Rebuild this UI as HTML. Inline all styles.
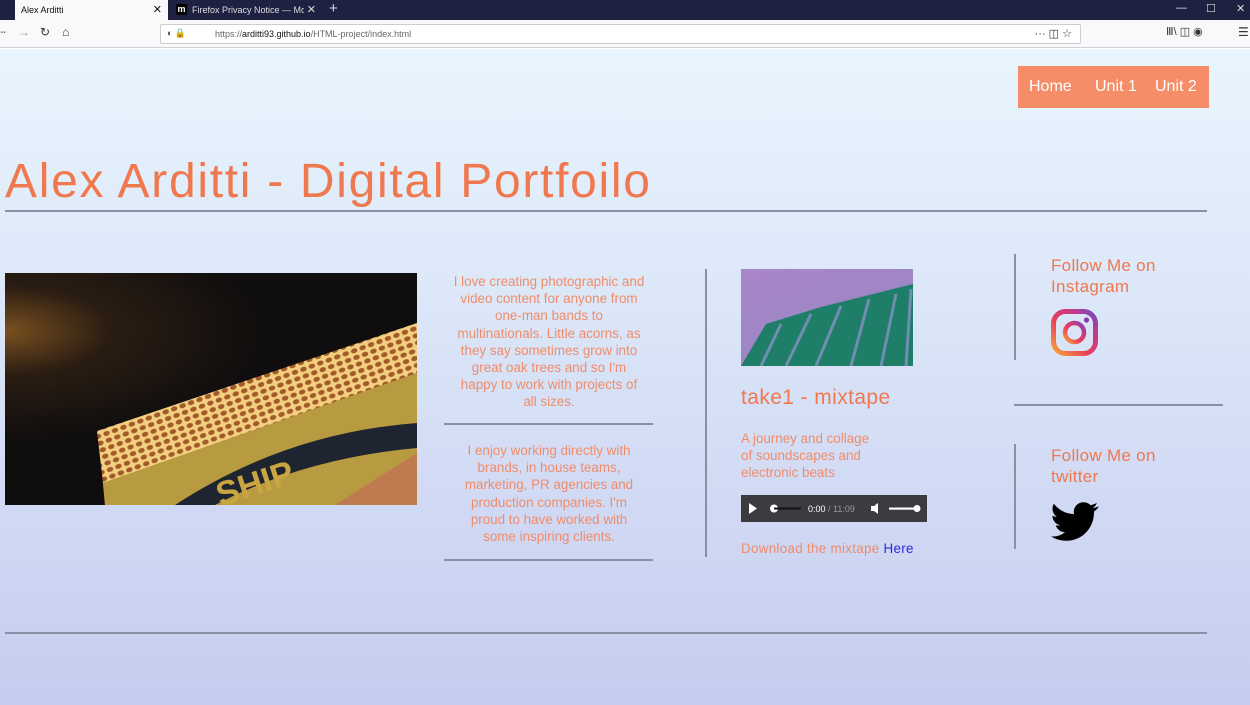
<!DOCTYPE html>
<html><head><meta charset="utf-8"><style>
*{margin:0;padding:0;box-sizing:border-box}
body{width:1250px;height:705px;overflow:hidden;font-family:"Liberation Sans","DejaVu Sans",sans-serif;position:relative;background:#fff}
.tabs{position:absolute;left:0;top:0;width:1250px;height:20px;background:#1f2143}
.tab1{position:absolute;left:15px;top:0;width:153px;height:20px;background:#f9f9fb;font-size:9px;color:#111;padding:5px 6px}
.tab1 .x{position:absolute;right:6px;top:3px;font-size:11px}
.tab2{position:absolute;left:170px;top:0;width:152px;height:20px;color:#ddd;font-size:9px;padding:5px 22px;white-space:nowrap;overflow:hidden}
.tab2 .m{position:absolute;left:6px;top:4px;width:11px;height:11px;background:#000;color:#fff;font-size:9px;font-weight:bold;line-height:10px;text-align:center}
.tab2 .t{display:inline-block;width:112px;overflow:hidden;vertical-align:top}
.tab2 .x{position:absolute;right:6px;top:3px;font-size:11px}
.plus{position:absolute;left:329px;top:0;color:#ddd;font-size:15px}
.win{position:absolute;top:2px;color:#ddd;font-size:11px}
.nav{position:absolute;left:0;top:20px;width:1250px;height:28px;background:#f9f9fb;border-bottom:1px solid #d0d0d8}
.url{position:absolute;left:160px;top:4px;width:921px;height:20px;background:#fff;border:1px solid #ccc;border-radius:2px;font-size:9px;color:#666;padding:4px 0 0 54px}
.url b{font-weight:normal;color:#111}
.ic{position:absolute;top:5px;font-size:12px;color:#333}
.page{position:absolute;left:0;top:49px;width:1250px;height:656px;background:linear-gradient(#e9f5fd,#dbe6f8 40%,#c6ccef)}
.o{color:#f0784f}
.menu{position:absolute;left:1018px;top:17px;width:191px;height:42px;background:#f48d68;color:#fff;font-size:16px}
.menu span{position:absolute;top:12px}
h1{position:absolute;left:5px;top:105px;font-weight:normal;font-size:48px;color:#f0784f;white-space:nowrap;letter-spacing:1.7px}
.hr{position:absolute;height:2px;background:#8592a6}
.vr{position:absolute;width:2px;background:#8592a6}
.photo{position:absolute;left:5px;top:224px;width:412px;height:232px;background:radial-gradient(ellipse at 0% 25%,#7a5020 0,#2a1d12 18%,#0f0d0e 45%);overflow:hidden}
.p{position:absolute;text-align:center;color:#f08c6a;font-size:13.4px;line-height:17.2px;white-space:nowrap}
.buil{position:absolute;left:741px;top:220px;width:172px;height:97px;background:linear-gradient(160deg,#a985c8,#9488c0);overflow:hidden}
.aud{position:absolute;left:741px;top:446px;width:186px;height:27px;background:#3b3b40}
</style></head><body>
<div class="tabs">
<div class="tab1">Alex Arditti<span class="x">✕</span></div>
<div class="tab2"><span class="m">m</span><span class="t">Firefox Privacy Notice — Mozill</span><span class="x">✕</span></div>
<div class="plus">+</div>
<div class="win" style="left:1176px">—</div><div class="win" style="left:1206px">☐</div><div class="win" style="left:1236px">✕</div>
</div>
<div class="nav">
<span class="ic" style="left:-4px">⇠</span><span class="ic" style="left:18px;color:#999">→</span><span class="ic" style="left:40px">↻</span><span class="ic" style="left:62px">⌂</span>
<div class="url">https://<b>arditti93.github.io</b>/HTML-project/index.html<span style="position:absolute;left:6px;top:3px;color:#444">◐ 🔒</span><span style="position:absolute;right:8px;top:2px;color:#333;font-size:11px">··· ◫ ☆</span></div>
<span class="ic" style="left:1166px;font-size:11px">Ⅲ\ ◫ ◉</span><span class="ic" style="left:1238px">☰</span>
</div>
<div class="page">
<div class="menu"><span style="left:11px">Home</span><span style="left:77px">Unit 1</span><span style="left:137px">Unit 2</span></div>
<h1>Alex Arditti - Digital Portfoilo</h1>
<div class="hr" style="left:5px;top:161px;width:1202px"></div>
<div class="photo">
<svg width="412" height="232" viewBox="0 0 412 232"><defs><pattern id="h" width="9" height="7" patternUnits="userSpaceOnUse" patternTransform="rotate(-20)"><rect width="9" height="7" fill="#f3d080"/><ellipse cx="4.5" cy="3.5" rx="3.3" ry="2.4" fill="#a35a2a"/></pattern></defs>
<polygon points="92,158 412,50 412,100 98,210" fill="url(#h)"/>
<polygon points="92,158 98,210 100,232 412,232 412,100 98,210" fill="#c9a642"/>
<polygon points="98,210 412,100 412,232 100,232" fill="#b89a40"/>
<path d="M170,232 Q280,160 412,150 L412,175 Q300,185 210,232Z" fill="#1f2530"/>
<text x="210" y="222" fill="#c9a642" font-size="34" font-weight="bold" transform="rotate(-18 250 210)">SHIP</text>
<polygon points="330,232 412,180 412,232" fill="#c07a50"/>
</svg></div>
<div class="p" style="left:444px;top:224px;width:210px">I love creating photographic and<br>video content for anyone from<br>one-man bands to<br>multinationals. Little acorns, as<br>they say sometimes grow into<br>great oak trees and so I'm<br>happy to work with projects of<br>all sizes.</div>
<div class="hr" style="left:444px;top:374px;width:209px"></div>
<div class="p" style="left:444px;top:393px;width:210px">I enjoy working directly with<br>brands, in house teams,<br>marketing, PR agencies and<br>production companies. I'm<br>proud to have worked with<br>some inspiring clients.</div>
<div class="hr" style="left:444px;top:510px;width:209px"></div>
<div class="vr" style="left:705px;top:220px;height:288px"></div>
<div class="buil"><svg width="172" height="97"><polygon points="0,97 25,55 80,38 172,15 172,97" fill="#1e7e68"/><g stroke="#6f8eb0" stroke-width="3"><line x1="20" y1="97" x2="40" y2="55"/><line x1="45" y1="97" x2="70" y2="45"/><line x1="75" y1="97" x2="100" y2="37"/><line x1="110" y1="97" x2="128" y2="30"/><line x1="140" y1="97" x2="155" y2="25"/><line x1="165" y1="97" x2="170" y2="20"/></g></svg></div>
<div class="o" style="position:absolute;left:741px;top:337px;font-size:21px;letter-spacing:.4px">take1 - mixtape</div>
<div class="p" style="left:741px;top:381px;text-align:left">A journey and collage<br>of soundscapes and<br>electronic beats</div>
<div class="aud"><svg width="186" height="27"><polygon points="8,8 8,19 16,13.5" fill="#fff"/><circle cx="33" cy="13.5" r="4" fill="#fff"/><rect x="33" y="12.5" width="27" height="2" fill="#111"/><text x="67" y="17" fill="#fff" font-size="9" font-family="Liberation Sans">0:00 <tspan fill="#999">/ 11:09</tspan></text><path d="M130,11h3l4,-3v11l-4,-3h-3z" fill="#fff"/><rect x="148" y="12.5" width="28" height="2.2" fill="#fff"/><circle cx="176" cy="13.5" r="3.5" fill="#fff"/></svg></div>
<div class="p" style="left:741px;top:491px;text-align:left;letter-spacing:.3px">Download the mixtape <span style="color:#2a2ae0">Here</span></div>
<div class="vr" style="left:1014px;top:205px;height:106px"></div>
<div class="o" style="position:absolute;left:1051px;top:206px;font-size:17px;line-height:21px;letter-spacing:.3px">Follow Me on<br>Instagram</div>
<svg style="position:absolute;left:1051px;top:260px" width="47" height="47" viewBox="0 0 47 47"><defs><linearGradient id="ig" x1="0" y1="1" x2="1" y2="0"><stop offset="0" stop-color="#f9a33a"/><stop offset=".4" stop-color="#e8405a"/><stop offset=".75" stop-color="#c23a8a"/><stop offset="1" stop-color="#6a4dc0"/></linearGradient></defs><rect x="2.5" y="2.5" width="42" height="42" rx="12" fill="none" stroke="url(#ig)" stroke-width="5"/><circle cx="23.5" cy="23.5" r="9.5" fill="none" stroke="url(#ig)" stroke-width="4.5"/><circle cx="35.5" cy="11" r="2.6" fill="#8a3ab0"/></svg>
<div class="hr" style="left:1014px;top:355px;width:209px"></div>
<div class="vr" style="left:1014px;top:395px;height:105px"></div>
<div class="o" style="position:absolute;left:1051px;top:396px;font-size:17px;line-height:21px;letter-spacing:.3px">Follow Me on<br>twitter</div>
<svg style="position:absolute;left:1051px;top:452px" width="48" height="42" viewBox="0 0 24 20"><path d="M23.6,2.3c-.9.4-1.8.6-2.8.8 1-.6 1.8-1.6 2.1-2.7-.9.6-2,1-3.1,1.2A4.9,4.9,0,0,0,11.5,6.1 13.9,13.9,0,0,1,1.4.9,4.9,4.9,0,0,0,2.9,7.4c-.8,0-1.6-.3-2.2-.6 0,2.4 1.7,4.4 3.9,4.8-.7.2-1.5.2-2.2.1.6,2 2.4,3.4 4.6,3.4A9.9,9.9,0,0,1,0,17.2 13.9,13.9,0,0,0,7.5,19.4c9.1,0 14-7.5 14-14v-.6c1-.7 1.8-1.6 2.4-2.5z" fill="#000"/></svg>
<div class="hr" style="left:5px;top:583px;width:1202px"></div>
</div>
</body></html>
